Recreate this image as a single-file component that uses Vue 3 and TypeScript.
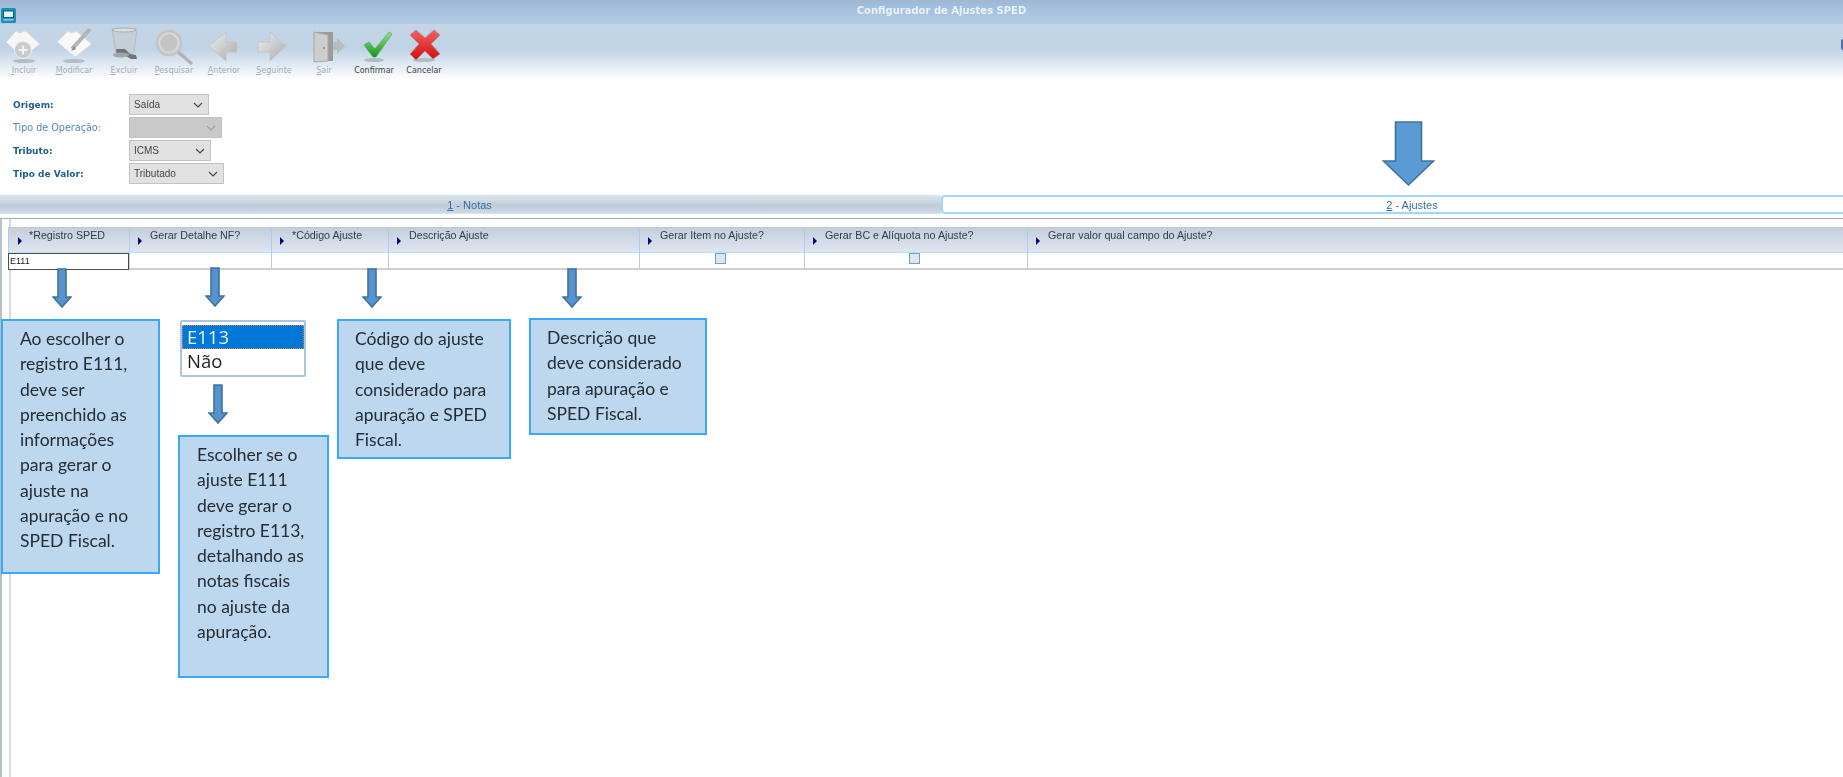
<template>
  <div class="screen">
    <div class="app-shell">
      <header class="titlebar">
        <svg class="app-icon" width="15" height="15" viewBox="0 0 15 15">
          <rect x="0" y="0" width="15" height="15" rx="1.5" fill="#1f8fb2" />
          <rect x="2.5" y="3" width="10" height="6.5" fill="#e6f2f8" stroke="#0d5f80" />
          <rect x="2.5" y="11" width="10" height="1.5" fill="#8fd0e2" />
        </svg>
        <span class="title-text">Configurador de Ajustes SPED</span>
      </header>

      <nav class="toolbar">
        <button v-for="tool in tools" :key="tool.label" class="tool" :class="{ active: tool.active }" type="button">
          <svg class="tool-icon" width="44" height="38" viewBox="0 0 44 38" v-html="tool.icon"></svg>
          <span class="tool-label"><u>{{ tool.label[0] }}</u>{{ tool.label.slice(1) }}</span>
        </button>
        <span class="edge-dot"></span>
      </nav>

      <section class="filters">
        <div v-for="field in fields" :key="field.label" class="field">
          <label class="field-label" :class="{ strong: field.strong }">{{ field.label }}</label>
          <div class="fake-select" :class="[field.size, { off: field.off }]">
            <span>{{ field.value }}</span>
            <svg width="10" height="6" viewBox="0 0 10 6"><path d="M1 1l4 4 4-4" fill="none" stroke="currentColor" stroke-width="1.2" /></svg>
          </div>
        </div>
      </section>

      <div class="tabs">
        <div class="tab"><span><u>1</u> - Notas</span></div>
        <div class="tab current"><span><u>2</u> - Ajustes</span></div>
      </div>

      <section class="sheet">
        <div class="grid">
          <div v-for="col in columns" :key="col" class="head-cell">
            <i class="marker"></i>
            <span>{{ col }}</span>
          </div>
          <div class="cell editing">E111</div>
          <div class="cell"></div>
          <div class="cell"></div>
          <div class="cell"></div>
          <div class="cell check"><i class="box"></i></div>
          <div class="cell check"><i class="box"></i></div>
          <div class="cell"></div>
        </div>
      </section>
    </div>

    <!-- anotacoes sobre a tela -->
    <svg
      v-for="a in arrows"
      :key="a.x + '-' + a.y"
      class="note-arrow"
      :style="{ left: a.x + 'px', top: a.y + 'px' }"
      width="20"
      height="40"
      viewBox="0 0 20 40"
    >
      <path d="M6 1h8v28h5L10 39 1 29h5z" fill="#5593cd" stroke="#41719c" stroke-width="1.6" />
    </svg>

    <svg class="note-arrow big" width="55" height="68" viewBox="0 0 55 68">
      <path d="M14.5 2h26v39h12L27.5 65 2.500 41h12z" fill="#5b9bd5" stroke="#41719c" stroke-width="1.6" />
    </svg>

    <div class="note note-a"><p>Ao escolher o<br />registro E111,<br />deve ser<br />preenchido as<br />informações<br />para gerar o<br />ajuste na<br />apuração e no<br />SPED Fiscal.</p></div>
    <div class="note note-b"><p>Escolher se o<br />ajuste E111<br />deve gerar o<br />registro E113,<br />detalhando as<br />notas fiscais<br />no ajuste da<br />apuração.</p></div>
    <div class="note note-c"><p>Código do ajuste<br />que deve<br />considerado para<br />apuração e SPED<br />Fiscal.</p></div>
    <div class="note note-d"><p>Descrição que<br />deve considerado<br />para apuração e<br />SPED Fiscal.</p></div>

    <div class="picker">
      <div class="picker-row selected">E113</div>
      <div class="picker-row">Não</div>
    </div>
  </div>
</template>

<script setup lang="ts">
interface Tool {
  label: string
  icon: string
  active?: boolean
}

const shadow = (y: number, rx = 11) => `<ellipse cx="22" cy="${y}" rx="${rx}" ry="2" fill="#8f9aa6" opacity=".55"/>`

const grayFill = `<linearGradient id="gr" x1="0" y1="0" x2="1" y2="1"><stop offset="0" stop-color="#f2f2f2"/><stop offset="1" stop-color="#a9a9a9"/></linearGradient>`

const tools: Tool[] = [
  {
    label: 'Incluir',
    icon: `${shadow(34)}<path d="M4 15 14 4l4 2 4-2 3 1 13 12-17 14z" fill="#f6f6f6" stroke="#d4d8dc"/><circle cx="21" cy="23" r="8.500" fill="#c8cacc" stroke="#eee"/><path d="M21 18.500v9M16.500 23h9" stroke="#f4f4f4" stroke-width="2.200"/>`
  },
  {
    label: 'Modificar',
    icon: `${shadow(34)}<path d="M5 15 16 4l4 2 4-2 16 13-17 13z" fill="#f8f8f8" stroke="#d4d8dc"/><path d="M38 2 20 22" stroke="#b4b4b4" stroke-width="4"/><path d="M22 19l-3 5 5-2z" fill="#8c8c8c"/>`
  },
  {
    label: 'Excluir',
    icon: `<path d="M10 2h25l-3 24H14z" fill="#c9ced3" opacity=".8" stroke="#b2b7bc"/><ellipse cx="22" cy="3" rx="12" ry="2" fill="#dde1e4" stroke="#a8adb3"/><path d="M14 22h9l5 5 6 1 1 4h-6l-5-3-9 1z" fill="#6f7276"/><ellipse cx="19" cy="28" rx="8" ry="2.500" fill="#a2a5a8"/>`
  },
  {
    label: 'Pesquisar',
    icon: `${grayFill}<path d="M26 25l13 11" stroke="#b3b3b3" stroke-width="3.400" stroke-linecap="round"/><circle cx="17" cy="16" r="12" fill="#d6d6d6" stroke="#c4c4c4" stroke-width="2.500"/><circle cx="17" cy="16" r="8.500" fill="#c4c4c4"/>`
  },
  {
    label: 'Anterior',
    icon: `${grayFill}<path d="M7 19 24 5v10h11v10H24v9z" fill="url(#gr)" stroke="#c6c6c6"/>`
  },
  {
    label: 'Seguinte',
    icon: `${grayFill}<path d="M34 19 18 5v10H6v10h12v9z" fill="url(#gr)" stroke="#c6c6c6"/>`
  },
  {
    label: 'Sair',
    icon: `<path d="M12 5h19v29H12z" fill="#9b9b9b"/><path d="M12 5l14 3v26l-14 1z" fill="#cdcdcd" stroke="#a8a8a8"/><circle cx="22" cy="21" r="1" fill="#888"/><path d="M31 15h4v-4l8 8-8 8v-4h-4z" fill="#b9bcbf"/>`
  },
  {
    label: 'Confirmar',
    active: true,
    icon: `<linearGradient id="ok" x1="0" y1="0" x2="0" y2="1"><stop offset="0" stop-color="#9fe08c"/><stop offset="1" stop-color="#0d9a1f"/></linearGradient>${shadow(33, 10)}<path d="M12 18l5-3 6 7L37 5l3 2-16 23h-3z" fill="url(#ok)" stroke="#3da33d" stroke-width=".6"/>`
  },
  {
    label: 'Cancelar',
    active: true,
    icon: `<linearGradient id="no" x1="0" y1="0" x2="0" y2="1"><stop offset="0" stop-color="#f26060"/><stop offset="1" stop-color="#d40d0d"/></linearGradient>${shadow(33, 11)}<path d="M14 3l9 8 9-8 6 5-9 9 9 10-7 5-8-8-9 9-6-6 9-10-9-9z" fill="url(#no)" stroke="#b08a8a" stroke-width="1"/>`
  }
]

const fields = [
  { label: 'Origem:', value: 'Saída', strong: true, size: 'w80' },
  { label: 'Tipo de Operação:', value: '', off: true, size: 'w93' },
  { label: 'Tributo:', value: 'ICMS', strong: true, size: 'w82' },
  { label: 'Tipo de Valor:', value: 'Tributado', strong: true, size: 'w95' }
]

const columns = [
  '*Registro SPED',
  'Gerar Detalhe NF?',
  '*Código Ajuste',
  'Descrição Ajuste',
  'Gerar Item no Ajuste?',
  'Gerar BC e Alíquota no Ajuste?',
  'Gerar valor qual campo do Ajuste?'
]

const arrows = [
  { x: 52, y: 268 },
  { x: 205, y: 267 },
  { x: 362, y: 268 },
  { x: 562, y: 268 },
  { x: 208, y: 384 }
]
</script>

<style scoped>
.screen {
  position: relative;
  width: 1843px;
  height: 777px;
  overflow: hidden;
  background: #fff;
  font-family: "Liberation Sans", Arial, sans-serif;
}

.app-shell {
  display: flex;
  flex-direction: column;
  height: 100%;
  filter: blur(0.45px);
}

.titlebar {
  display: grid;
  grid-template-columns: 1fr auto 1fr;
  height: 24px;
  box-sizing: border-box;
  border-top: 1px solid #aab4c4;
  background: linear-gradient(#9db9da, #b4cbe3);
}

.app-icon {
  margin: 7px 0 0 1px;
}

.title-text {
  grid-column: 2;
  margin: 3px 0 0 40px;
  font: bold 10px/13px "DejaVu Sans", sans-serif;
  color: #eaf1f8;
  white-space: nowrap;
}

.toolbar {
  position: relative;
  display: flex;
  height: 56px;
  margin-left: -1px;
  background: linear-gradient(#c3d5e7 0, #c0d3e5 45%, #ffffff 100%);
}

.tool {
  display: flex;
  flex-direction: column;
  align-items: center;
  width: 50px;
  padding: 4px 0 0;
  border: 0;
  background: none;
}

.tool-icon {
  display: block;
  margin-top: -1px;
  margin-bottom: 1px;
  filter: blur(0.5px);
}

.tool-label {
  font: 8px/10px "DejaVu Sans", sans-serif;
  color: #a7adb4;
  white-space: nowrap;
}

.tool.active .tool-label {
  color: #39434d;
}

.tool-label u {
  text-decoration-thickness: 1px;
}

.tool.active .tool-label u {
  text-decoration: none;
}

.edge-dot {
  position: absolute;
  right: -2px;
  top: 15px;
  width: 4px;
  height: 11px;
  border-radius: 2px;
  background: #55709e;
}

.filters {
  display: flex;
  flex-direction: column;
  gap: 2px;
  height: 115px;
  box-sizing: border-box;
  padding-top: 14px;
}

.field {
  display: flex;
  align-items: center;
  height: 21px;
}

.field-label {
  width: 116px;
  margin: 1px 0 0 13px;
  font: 9.6px/12px "DejaVu Sans", sans-serif;
  color: #4f88b4;
}

.field-label.strong {
  font-size: 9px;
  font-weight: bold;
  color: #1f5c92;
}

.fake-select {
  display: flex;
  align-items: center;
  justify-content: space-between;
  box-sizing: border-box;
  height: 21px;
  padding: 0 5px 0 4px;
  border: 1px solid #c2c2c2;
  background: #e1e1e1;
  font: 10px/12px "Liberation Sans", sans-serif;
  color: #444;
}

.fake-select.off {
  background: #c9c9c9;
  color: #a0a0a0;
}

.w80 { width: 80px; }
.w82 { width: 82px; }
.w93 { width: 93px; }
.w95 { width: 95px; }

.tabs {
  display: flex;
  height: 19px;
}

.tab {
  display: flex;
  align-items: center;
  justify-content: center;
  box-sizing: border-box;
  width: 941px;
  border-top: 1px solid #d3e6f7;
  border-bottom: 1px solid #d3e6f7;
  background: linear-gradient(#dbe3ec, #bfcbd9 55%, #cfd9e4);
  font-size: 11px;
  color: #3a6d9c;
}

.tab span {
  margin-right: 2px;
}

.tab.current {
  flex: 1;
  width: auto;
  border: 2px solid #a0d6ff;
  border-right: 0;
  border-radius: 4px 0 0 4px;
  background: #fff;
}

.tab.current span {
  margin: 1px 0 0 38px;
}

.sheet {
  position: relative;
  flex: 1;
  margin-top: 4px;
  padding: 8px 0 0 7px;
  border-top: 1px solid #a9a9a9;
  border-left: 2px solid #b3bfcd;
}

.sheet::before {
  content: "";
  position: absolute;
  left: 7px;
  top: 0;
  bottom: 0;
  width: 2px;
  background: #d9d9d9;
}

.grid {
  position: relative;
  display: grid;
  grid-template-columns: 121px 142px 117px 251px 165px 223px 1fr;
  grid-template-rows: 26px 17px;
  margin-left: -1px;
}

.head-cell {
  display: flex;
  box-sizing: border-box;
  height: 26px;
  padding-left: 8px;
  border-top: 1px solid #bfc6cf;
  border-left: 1px solid #a8d0f5;
  border-bottom: 1px solid #b9ddfa;
  background: linear-gradient(#c5cfdc, #dde5ef);
  font-size: 10.7px;
  color: #333b44;
}

.head-cell:first-child {
  padding-left: 9px;
}

.head-cell:first-child .marker {
  margin-right: 7px;
}

.head-cell span {
  margin-top: 1px;
  line-height: 12px;
  white-space: nowrap;
}

.marker {
  flex: none;
  width: 0;
  height: 0;
  margin: 9px 8px 0 0;
  border-top: 4px solid transparent;
  border-bottom: 4px solid transparent;
  border-left: 4px solid #000080;
}

.cell {
  box-sizing: border-box;
  height: 17px;
  border-left: 1px solid #c8c8c8;
  border-bottom: 2px solid #cfcfcf;
  background: #fff;
}

.cell.editing {
  padding-left: 1px;
  border: 1px solid #4d4d4d;
  font-size: 9px;
  line-height: 15px;
  color: #222;
}

.cell.check {
  display: flex;
  align-items: center;
  justify-content: center;
}

.box {
  width: 9px;
  height: 9px;
  margin: -4px 3px 0 0;
  border: 1px solid #69a6c6;
  background: #dfe5ea;
}

.note-arrow {
  position: absolute;
  filter: blur(0.4px);
}

.note-arrow.big {
  left: 1381px;
  top: 120px;
}

.note {
  position: absolute;
  box-sizing: border-box;
  border: 2px solid #3aa8f8;
  background: #bdd7ee;
  font: 17.5px/25.3px Lato, "Open Sans", sans-serif;
  color: #262c33;
  filter: blur(0.35px);
}

.note p {
  margin: 0;
  white-space: nowrap;
}

.note-a {
  left: 1px;
  top: 319px;
  width: 159px;
  height: 255px;
  padding: 5px 0 0 17px;
}

.note-b {
  left: 178px;
  top: 435px;
  width: 151px;
  height: 243px;
  padding: 5px 0 0 17px;
}

.note-c {
  left: 337px;
  top: 319px;
  width: 174px;
  height: 140px;
  padding: 5px 0 0 16px;
}

.note-d {
  left: 529px;
  top: 318px;
  width: 178px;
  height: 117px;
  padding: 5px 0 0 16px;
}

.picker {
  position: absolute;
  left: 180px;
  top: 320px;
  width: 126px;
  height: 57px;
  box-sizing: border-box;
  padding-top: 3px;
  border: 2px solid #a9c7e2;
  border-radius: 2px;
  background: #fff;
  font: 18.5px/24px "Open Sans", sans-serif;
  color: #1e1e1e;
  filter: blur(0.35px);
}

.picker-row {
  height: 24px;
  padding-left: 5px;
}

.picker-row.selected {
  outline: 1px dotted #d98a2b;
  outline-offset: -1px;
  background: #0078d7;
  color: #e9f4ff;
}
</style>

<style>
html,
body {
  margin: 0;
  background: #fff;
}
</style>
